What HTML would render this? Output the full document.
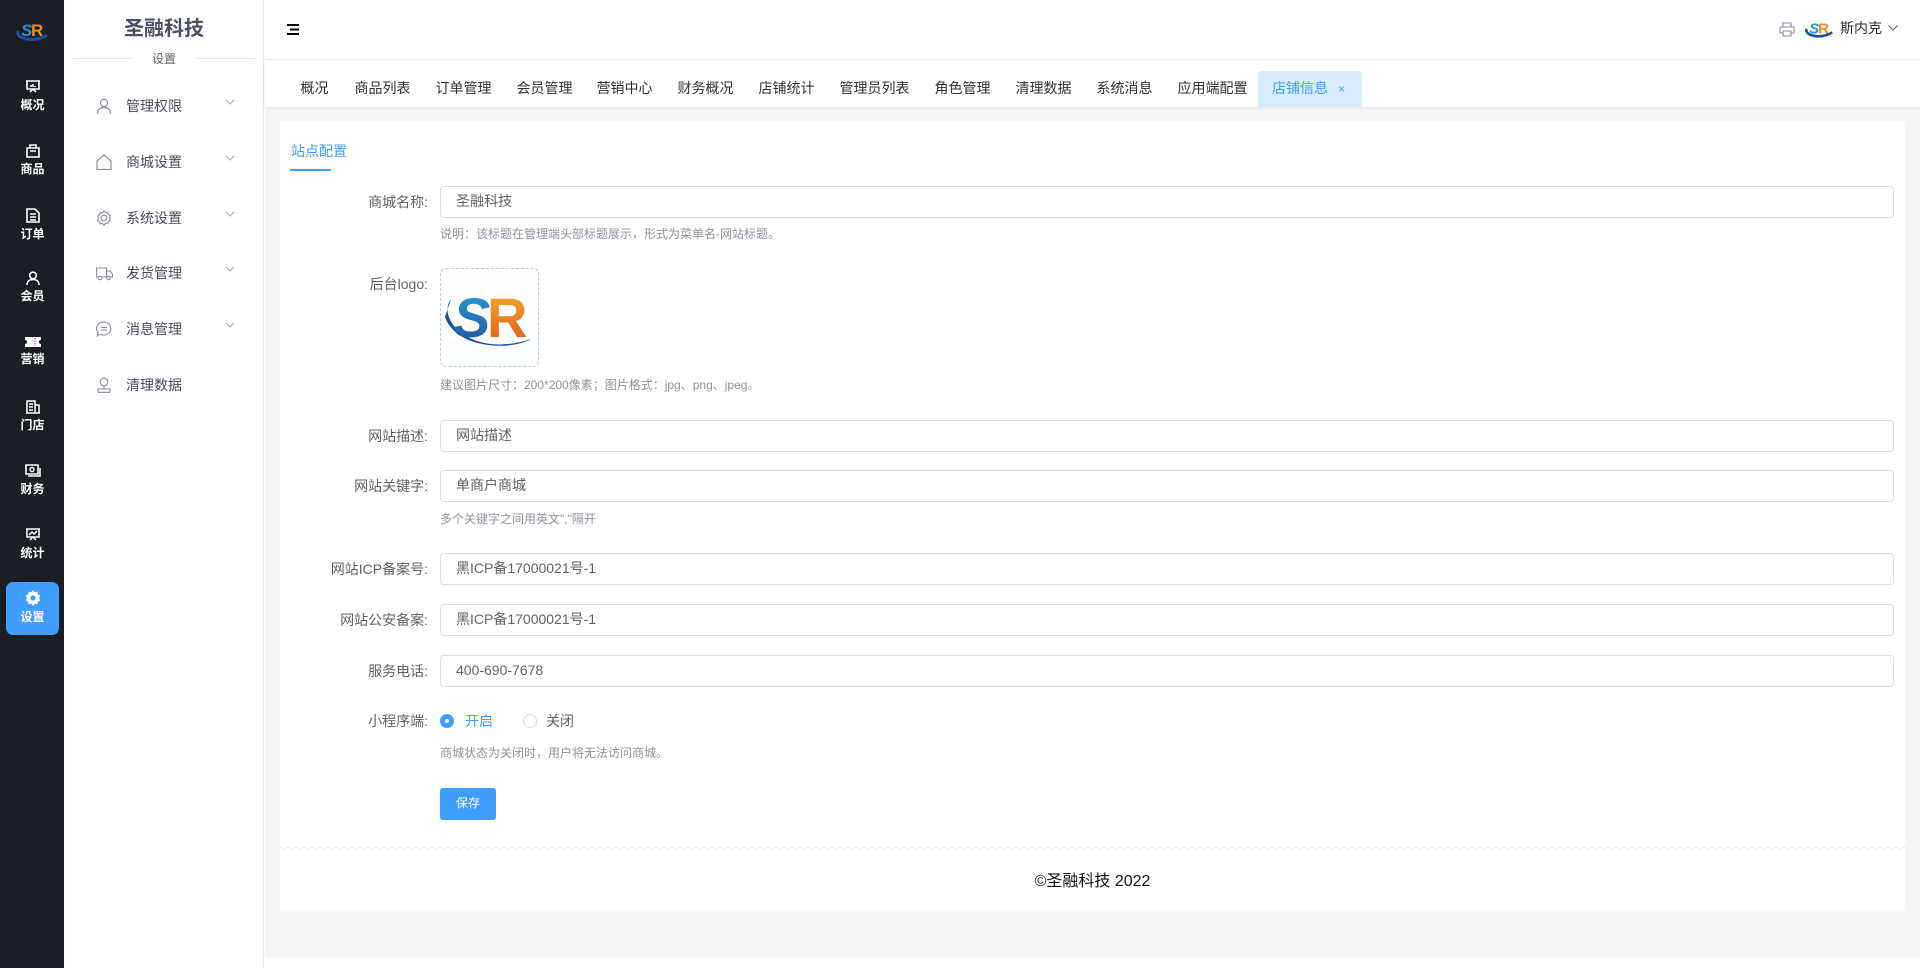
<!DOCTYPE html>
<html><head><meta charset="utf-8">
<style>
*{box-sizing:border-box;margin:0;padding:0}
body{width:1920px;height:968px;overflow:hidden;font-family:"Liberation Sans","Noto Sans CJK SC",sans-serif;background:#fff;position:relative;color:#606266}
.abs{position:absolute}
#dark{left:0;top:0;width:64px;height:968px;background:#1b1e24}
.ni{position:absolute;left:6px;width:53px;height:53px;color:#fff;font-size:12px;font-weight:bold;text-align:center}
.ni svg{display:block;margin:8px auto 2px}
.ni.act{background:#409eff;border-radius:7px}
#sub{left:64px;top:0;width:200px;height:968px;background:#fff;border-right:1px solid #e6e6e6}
.mi{position:absolute;left:0;width:200px;height:40px;font-size:14px;color:#4a4d55}
.mi svg.ic{position:absolute;left:32px;top:12px}
.mi span{position:absolute;left:62px;top:10px}
.mi .ar{position:absolute;left:160px;top:12px}
#main{left:265px;top:0;width:1655px;height:968px;background:#f6f7f9}
#hdr{left:0;top:0;width:1655px;height:60px;background:#fff;border-bottom:1px solid #e8e8e8}
#tabs{left:0;top:61px;width:1655px;height:46px;background:#fff;box-shadow:0 2px 4px rgba(0,0,0,.06)}
.tab{position:absolute;top:10px;height:36px;line-height:34px;font-size:14px;color:#303133;padding:0 12.5px;white-space:nowrap}
.tab.act{background:#d9ecff;color:#409eff;border-radius:4px 4px 0 0;padding:0 14px}
#card{left:15px;top:121px;width:1625px;height:789px;background:#fff}
.lbl{position:absolute;right:1477px;font-size:14px;color:#606266;text-align:right;white-space:nowrap}
.inp{position:absolute;left:160px;width:1454px;height:32px;border:1px solid #dcdfe6;border-radius:4px;font-size:14px;color:#606266;line-height:28px;padding-left:15px}
.hint{position:absolute;left:160px;font-size:12px;color:#909399;white-space:nowrap}
</style></head><body>
<div id="dark" class="abs">
 <svg class="abs" style="left:15px;top:17px" width="34" height="26" viewBox="0 0 34 26">
  <path d="M3 14 C0 22 20 26 32 18" stroke="#1f4f9a" stroke-width="3" fill="none"/>
  <text x="6" y="19" font-size="17" font-weight="bold" font-style="italic" fill="#2a8fd6" font-family="Liberation Sans">S</text>
  <text x="16" y="19" font-size="17" font-weight="bold" fill="#f08c1e" font-family="Liberation Sans">R</text>
 </svg>
 <div class="ni" style="top:72px"><svg width="16" height="14" viewBox="0 0 16 14"><path d="M1 1h14M2 1v8h12V1M5 12l3-3 3 3M6 7V5M8 7V4M10 7V6" stroke="#fff" stroke-width="1.6" fill="none"/></svg>概况</div>
 <div class="ni" style="top:136px"><svg width="14" height="14" viewBox="0 0 14 14"><path d="M1 4h12v9H1zM4 4V1h6v3M4 7h6" stroke="#fff" stroke-width="1.6" fill="none"/></svg>商品</div>
 <div class="ni" style="top:200px"><svg width="14" height="15" viewBox="0 0 14 15"><path d="M1 1h8l4 4v9H1zM4 6h6M4 9h6M4 12h6" stroke="#fff" stroke-width="1.6" fill="none"/></svg>订单</div>
 <div class="ni" style="top:263px"><svg width="14" height="14" viewBox="0 0 14 14"><circle cx="7" cy="4.5" r="3.3" stroke="#fff" stroke-width="1.6" fill="none"/><path d="M1 14c0-4 3-5.5 6-5.5s6 1.5 6 5.5" stroke="#fff" stroke-width="1.6" fill="none"/></svg>会员</div>
 <div class="ni" style="top:328px"><svg width="16" height="12" viewBox="0 0 16 12"><path d="M0 1h16v3a2 2 0 0 0 0 4v3H0V8a2 2 0 0 0 0-4z" fill="#fff"/><path d="M10 2v8" stroke="#8a2be2" stroke-width="1" stroke-dasharray="1.5 1"/></svg>营销</div>
 <div class="ni" style="top:392px"><svg width="14" height="14" viewBox="0 0 14 14"><path d="M1 13V1h8v12M9 5h4v8M0 13h14M3 4h4M3 7h4M3 10h4" stroke="#fff" stroke-width="1.5" fill="none"/></svg>门店</div>
 <div class="ni" style="top:456px"><svg width="16" height="14" viewBox="0 0 16 14"><path d="M1 1h12v9H1zM3 12h12V4" stroke="#fff" stroke-width="1.6" fill="none"/><circle cx="7" cy="5.5" r="2" stroke="#fff" stroke-width="1.4" fill="none"/></svg>财务</div>
 <div class="ni" style="top:520px"><svg width="16" height="14" viewBox="0 0 16 14"><path d="M1 1h14M2 1v8h12V1M5 12l3-3 3 3M4 7l3-3 2 2 3-3" stroke="#fff" stroke-width="1.5" fill="none"/></svg>统计</div>
 <div class="ni act" style="top:582px"><svg width="16" height="16" viewBox="0 0 16 16"><path d="M8 0l1.6 2.2 2.7-.6.5 2.7 2.5 1.2-1.2 2.5 1.2 2.5-2.5 1.2-.5 2.7-2.7-.6L8 16l-1.6-2.2-2.7.6-.5-2.7L.7 10.5 1.9 8 .7 5.5l2.5-1.2.5-2.7 2.7.6z" fill="#fff"/><circle cx="8" cy="8" r="2.6" fill="#409eff"/></svg>设置</div>
</div>
<div id="sub" class="abs">
 <div class="abs" style="left:0;top:12px;width:200px;text-align:center;font-size:20px;font-weight:bold;color:#4a5060">圣融科技</div>
 <div class="abs" style="left:9px;top:58px;width:60px;height:1px;background:#e6e6e6"></div>
 <div class="abs" style="left:131px;top:58px;width:60px;height:1px;background:#e6e6e6"></div>
 <div class="abs" style="left:0;top:50px;width:200px;text-align:center;font-size:12px;color:#606266">设置</div>
 <div class="mi" style="top:86px"><svg class="ic" width="16" height="16" viewBox="0 0 16 16"><circle cx="8" cy="5" r="3.6" stroke="#8a8f99" stroke-width="1.2" fill="none"/><path d="M1.5 15.5c0-4 3-6 6.5-6s6.5 2 6.5 6" stroke="#8a8f99" stroke-width="1.2" fill="none"/></svg><span>管理权限</span><svg class="ar" width="12" height="8" viewBox="0 0 12 8"><path d="M2 2l4 4 4-4" stroke="#a8abb2" stroke-width="1" fill="none"/></svg></div>
 <div class="mi" style="top:142px"><svg class="ic" width="16" height="16" viewBox="0 0 16 16"><path d="M1 15.5V7L8 .8 15 7v8.5z" stroke="#8a8f99" stroke-width="1.2" fill="none"/></svg><span>商城设置</span><svg class="ar" width="12" height="8" viewBox="0 0 12 8"><path d="M2 2l4 4 4-4" stroke="#a8abb2" stroke-width="1" fill="none"/></svg></div>
 <div class="mi" style="top:198px"><svg class="ic" width="16" height="16" viewBox="0 0 16 16"><path d="M8 .8l1.5 1.8 2.3-.5.6 2.3 2.1 1.1-1 2.3 1 2.3-2.1 1.1-.6 2.3-2.3-.5L8 15.2l-1.5-1.8-2.3.5-.6-2.3-2.1-1.1 1-2.3-1-2.3 2.1-1.1.6-2.3 2.3.5z" stroke="#8a8f99" stroke-width="1.1" fill="none"/><circle cx="8" cy="8" r="2.8" stroke="#8a8f99" stroke-width="1.1" fill="none"/></svg><span>系统设置</span><svg class="ar" width="12" height="8" viewBox="0 0 12 8"><path d="M2 2l4 4 4-4" stroke="#a8abb2" stroke-width="1" fill="none"/></svg></div>
 <div class="mi" style="top:253px"><svg class="ic" width="17" height="16" viewBox="0 0 17 16"><path d="M.6 3h10v9H.6zM10.6 6h3.5l2.4 3v3h-5.9" stroke="#8a8f99" stroke-width="1.1" fill="none"/><circle cx="4" cy="13" r="1.7" fill="#fff" stroke="#8a8f99" stroke-width="1.1"/><circle cx="12.5" cy="13" r="1.7" fill="#fff" stroke="#8a8f99" stroke-width="1.1"/></svg><span>发货管理</span><svg class="ar" width="12" height="8" viewBox="0 0 12 8"><path d="M2 2l4 4 4-4" stroke="#a8abb2" stroke-width="1" fill="none"/></svg></div>
 <div class="mi" style="top:309px"><svg class="ic" width="16" height="16" viewBox="0 0 16 16"><path d="M8 1a7 6.5 0 1 1-3.5 12.2L1.2 15l.9-3.4A7 6.5 0 0 1 8 1z" stroke="#8a8f99" stroke-width="1.1" fill="none"/><path d="M5 6.5h6M5 9h6" stroke="#8a8f99" stroke-width="1.1"/></svg><span>消息管理</span><svg class="ar" width="12" height="8" viewBox="0 0 12 8"><path d="M2 2l4 4 4-4" stroke="#a8abb2" stroke-width="1" fill="none"/></svg></div>
 <div class="mi" style="top:365px"><svg class="ic" width="16" height="16" viewBox="0 0 16 16"><circle cx="8" cy="5" r="3.8" stroke="#8a8f99" stroke-width="1.1" fill="none"/><path d="M8 9v3M2 12h12v3.3H2z" stroke="#8a8f99" stroke-width="1.1" fill="none"/></svg><span>清理数据</span></div>
</div>
<div id="main" class="abs">
 <div id="hdr" class="abs">
  <svg class="abs" style="left:22px;top:24px" width="12" height="11" viewBox="0 0 12 11"><path d="M0 1h12M3 5.5h9M0 10h12" stroke="#000" stroke-width="2"/></svg>
  <svg class="abs" style="left:1514px;top:22px" width="16" height="15" viewBox="0 0 16 15"><path d="M4 5V1h8v4M1 5h14v6h-3M4 11H1V5M4 9h8v5H4z" stroke="#8a8f99" stroke-width="1.1" fill="none"/></svg>
  <svg class="abs" style="left:1539px;top:16px" width="30" height="24" viewBox="0 0 34 26">
   <path d="M3 14 C0 22 20 26 32 18" stroke="#1f4f9a" stroke-width="3" fill="none"/>
   <text x="6" y="19" font-size="17" font-weight="bold" font-style="italic" fill="#2a8fd6" font-family="Liberation Sans">S</text>
   <text x="16" y="19" font-size="17" font-weight="bold" fill="#f08c1e" font-family="Liberation Sans">R</text>
  </svg>
  <div class="abs" style="left:1575px;top:18px;font-size:14px;color:#303133">斯内克</div>
  <svg class="abs" style="left:1622px;top:24px" width="12" height="8" viewBox="0 0 12 8"><path d="M1.5 1.5l4.5 4.5 4.5-4.5" stroke="#606266" stroke-width="1.1" fill="none"/></svg>
 </div>
 <div id="tabs" class="abs">
  <div class="tab" style="left:23px">概况</div>
  <div class="tab" style="left:77px">商品列表</div>
  <div class="tab" style="left:158px">订单管理</div>
  <div class="tab" style="left:239px">会员管理</div>
  <div class="tab" style="left:319px">营销中心</div>
  <div class="tab" style="left:400px">财务概况</div>
  <div class="tab" style="left:481px">店铺统计</div>
  <div class="tab" style="left:562px">管理员列表</div>
  <div class="tab" style="left:657px">角色管理</div>
  <div class="tab" style="left:738px">清理数据</div>
  <div class="tab" style="left:819px">系统消息</div>
  <div class="tab" style="left:900px">应用端配置</div>
  <div class="tab act" style="left:993px;width:104px">店铺信息 <span style="font-size:12px;margin-left:6px">×</span></div>
 </div>
 <div id="card" class="abs">
  <div class="abs" style="left:11px;top:20px;font-size:14px;color:#409eff">站点配置</div>
  <div class="abs" style="left:10px;top:48px;width:41px;height:2px;background:#409eff"></div>
  <div class="lbl" style="top:71px">商城名称:</div>
  <div class="inp" style="top:65px">圣融科技</div>
  <div class="hint" style="top:104px">说明：该标题在管理端头部标题展示，形式为菜单名-网站标题。</div>
  <div class="lbl" style="top:153px">后台logo:</div>
  <div class="abs" style="left:160px;top:147px;width:99px;height:99px;border:1px dashed #c0ccda;border-radius:6px;background:#fbfdff;overflow:hidden">
   <svg width="97" height="97" viewBox="0 0 97 97">
    <defs><linearGradient id="gb" x1="0" y1="0" x2="0" y2="1"><stop offset="0" stop-color="#2aa0dc"/><stop offset="1" stop-color="#1f4f9a"/></linearGradient>
    <linearGradient id="go" x1="0" y1="0" x2="0" y2="1"><stop offset="0" stop-color="#f3b12c"/><stop offset="1" stop-color="#e2561a"/></linearGradient></defs>
    <path d="M10 30 C-5 50 30 90 90 70 C70 82 15 80 4 48 Z" fill="#1f4f9a"/>
    <text x="12" y="68" font-size="56" font-weight="bold" font-style="italic" fill="url(#gb)" font-family="Liberation Sans">S</text>
    <text x="46" y="68" font-size="56" font-weight="bold" fill="url(#go)" font-family="Liberation Sans">R</text>
   </svg>
  </div>
  <div class="hint" style="top:255px">建议图片尺寸：200*200像素；图片格式：jpg、png、jpeg。</div>
  <div class="lbl" style="top:305px">网站描述:</div>
  <div class="inp" style="top:299px">网站描述</div>
  <div class="lbl" style="top:355px">网站关键字:</div>
  <div class="inp" style="top:349px">单商户商城</div>
  <div class="hint" style="top:389px">多个关键字之间用英文","隔开</div>
  <div class="lbl" style="top:438px">网站ICP备案号:</div>
  <div class="inp" style="top:432px">黑ICP备17000021号-1</div>
  <div class="lbl" style="top:489px">网站公安备案:</div>
  <div class="inp" style="top:483px">黑ICP备17000021号-1</div>
  <div class="lbl" style="top:540px">服务电话:</div>
  <div class="inp" style="top:534px">400-690-7678</div>
  <div class="lbl" style="top:590px">小程序端:</div>
  <div class="abs" style="left:160px;top:593px;width:14px;height:14px;border-radius:50%;background:#409eff"><div style="margin:5px;width:4px;height:4px;border-radius:50%;background:#fff"></div></div>
  <div class="abs" style="left:185px;top:590px;font-size:14px;color:#409eff">开启</div>
  <div class="abs" style="left:243px;top:593px;width:14px;height:14px;border-radius:50%;border:1px solid #dcdfe6"></div>
  <div class="abs" style="left:266px;top:590px;font-size:14px;color:#606266">关闭</div>
  <div class="hint" style="top:623px">商城状态为关闭时，用户将无法访问商城。</div>
  <div class="abs" style="left:160px;top:667px;width:56px;height:32px;background:#409eff;border-radius:3px;color:#fff;font-size:12px;line-height:31px;text-align:center">保存</div>
  <svg class="abs" style="left:0;top:724px" width="1625" height="6"><defs><pattern id="wv" width="8" height="6" patternUnits="userSpaceOnUse"><path d="M0 2l4 3 4-3" stroke="#e4e6ea" stroke-width="1" fill="none"/></pattern></defs><rect width="1625" height="6" fill="url(#wv)"/></svg>
  <div class="abs" style="left:0;top:746px;width:1625px;text-align:center;font-size:16px;color:#111">©圣融科技 2022</div>
 </div>
 <div class="abs" style="left:0;top:958px;width:1655px;height:10px;background:#fff"></div>
</div>
</body></html>
